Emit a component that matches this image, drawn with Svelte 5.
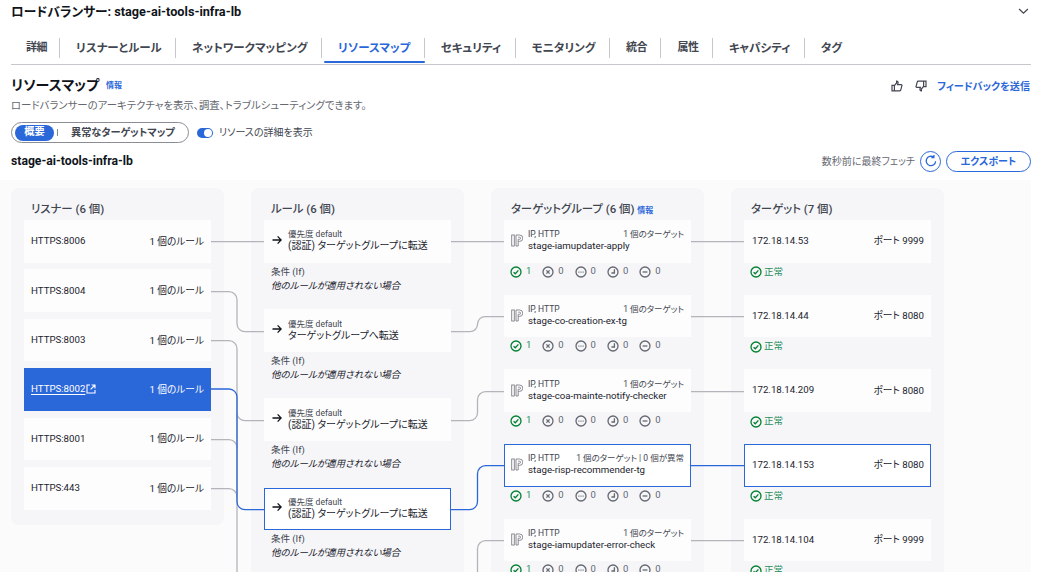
<script>
	const tabs = ["詳細", "リスナーとルール", "ネットワークマッピング", "リソースマップ", "セキュリティ", "モニタリング", "統合", "属性", "キャパシティ", "タグ"];
	const listeners = ["HTTPS:8006", "HTTPS:8004", "HTTPS:8003", "HTTPS:8002", "HTTPS:8001", "HTTPS:443"];
	const rules = [
		{ action: "(認証) ターゲットグループに転送" },
		{ action: "ターゲットグループへ転送" },
		{ action: "(認証) ターゲットグループに転送" },
		{ action: "(認証) ターゲットグループに転送", selected: true }
	];
	const groups = [
		{ name: "stage-iamupdater-apply", count: "1 個のターゲット" },
		{ name: "stage-co-creation-ex-tg", count: "1 個のターゲット" },
		{ name: "stage-coa-mainte-notify-checker", count: "1 個のターゲット" },
		{ name: "stage-risp-recommender-tg", count: "1 個のターゲット | 0 個が異常", selected: true },
		{ name: "stage-iamupdater-error-check", count: "1 個のターゲット" }
	];
	const targets = [
		{ ip: "172.18.14.53", port: "ポート 9999" },
		{ ip: "172.18.14.44", port: "ポート 8080" },
		{ ip: "172.18.14.209", port: "ポート 8080" },
		{ ip: "172.18.14.153", port: "ポート 8080", selected: true },
		{ ip: "172.18.14.104", port: "ポート 9999" }
	];
	const greyLines = [
		"M211 241.7H264",
		"M211 291.7H229a8 8 0 0 1 8 8V323.7a8 8 0 0 0 8 8H264",
		"M211 340.7H229a8 8 0 0 1 8 8V572",
		"M237 412.7a8 8 0 0 0 8 8H264",
		"M211 439.7H229a8 8 0 0 1 8 8",
		"M211 488.7H229a8 8 0 0 1 8 8",
		"M451 241.7H504",
		"M451 331.7H470a7.5 7.5 0 0 0 7.5-7.5a7.5 7.5 0 0 1 7.5-7.5H504",
		"M451 420.7H469.5a8 8 0 0 0 8-8V399.7a8 8 0 0 1 8-8H504",
		"M504 540.7H485.5a8 8 0 0 0-8 8V572",
		"M691 241.7H744",
		"M691 316.7H744",
		"M691 391.7H744",
		"M691 540.7H744"
	];
	const blueLines = [
		"M211 389H229a8 8 0 0 1 8 8V501.7a8 8 0 0 0 8 8H264",
		"M451 509.7H469.5a8 8 0 0 0 8-8V473.7a8 8 0 0 1 8-8H504",
		"M691 465.7H744"
	];
</script>

{#snippet status(kind)}
	<svg class="status-icon" class:ok={kind === "ok"} viewBox="0 0 12 12" width="12" height="12">
		<circle cx="6" cy="6" r="5" />
		{#if kind === "ok"}
			<path d="M3.6 6.2 5.3 7.8 8.4 4.4" />
		{:else if kind === "bad"}
			<path d="M4.4 4.4 7.6 7.6M7.6 4.4 4.4 7.6" />
		{:else if kind === "dots"}
			<path d="M3.4 6.2h1M5.5 6.2h1M7.6 6.2h1" />
		{:else if kind === "clock"}
			<path d="M7.4 3.2V7H4.4" />
		{:else}
			<path d="M3.6 6h4.8" />
		{/if}
	</svg>
{/snippet}

{#snippet ipIcon()}
	<svg class="ip-icon" viewBox="0 0 12 13" width="12" height="13">
		<rect x="0.7" y="1" width="2.6" height="11" />
		<path d="M5 12V1h3.6a3 3 0 0 1 0 6.4H7.2M7.2 3.2h1.3a1 1 0 0 1 0 2.1H7.2V12H5" />
	</svg>
{/snippet}

<div class="page">
	<header class="top">
		<h1>ロードバランサー: stage-ai-tools-infra-lb</h1>
		<svg class="chevron" viewBox="0 0 12 8" width="11" height="7"><path d="M1 1.2 6 6l5-4.8" /></svg>
	</header>

	<nav class="tabs">
		{#each tabs as tab, i}
			<div class="tab" class:active={i === 3} class:short={tab.length === 2 && i !== 9}>{tab}</div>
		{/each}
	</nav>

	<section class="intro">
		<div class="title-row">
			<h2>リソースマップ</h2>
			<a class="info">情報</a>
			<div class="feedback">
				<svg class="thumb" viewBox="0 0 12 12" width="12" height="12"><path d="M1 5.4h2.4v5.4H1zM3.4 5.6 5.6 3V1.2c1.3 0 1.7 1 1.4 2L6.6 4.6h3.6c.7 0 .9.6.7 1.1l-1.1 4.2c-.1.6-.5.9-1 .9H3.4" /></svg>
				<svg class="thumb down" viewBox="0 0 12 12" width="12" height="12"><path d="M1 5.4h2.4v5.4H1zM3.4 5.6 5.6 3V1.2c1.3 0 1.7 1 1.4 2L6.6 4.6h3.6c.7 0 .9.6.7 1.1l-1.1 4.2c-.1.6-.5.9-1 .9H3.4" /></svg>
				<a class="feedback-link">フィードバックを送信</a>
			</div>
		</div>
		<p class="desc">ロードバランサーのアーキテクチャを表示、調査、トラブルシューティングできます。</p>
		<div class="controls">
			<div class="segments">
				<span class="seg-on">概要</span>
				<span class="seg-div"></span>
				<span class="seg-off">異常なターゲットマップ</span>
			</div>
			<span class="toggle"><span class="knob"></span></span>
			<span class="toggle-label">リソースの詳細を表示</span>
		</div>
		<div class="name-row">
			<h3>stage-ai-tools-infra-lb</h3>
			<span class="fetched">数秒前に最終フェッチ</span>
			<button class="refresh" aria-label="更新">
				<svg viewBox="0 0 14 14" width="14" height="14"><path d="M11.6 7.2A4.7 4.7 0 1 1 9.6 3.1M9.9 1v2.6H7.3" /></svg>
			</button>
			<button class="export">エクスポート</button>
		</div>
	</section>

	<section class="canvas">
		<div class="column listeners">
			<div class="col-title">リスナー (6 個)</div>
			<div class="stack">
				{#each listeners as name, i}
					<div class="card row" class:current={i === 3}>
						{#if i === 3}
							<span class="linked"><span class="under">{name}</span>
								<svg viewBox="0 0 10 10" width="10" height="10"><path d="M4 1H1v8h8V6M5.6 1H9v3.4M9 1 4.6 5.4" /></svg>
							</span>
						{:else}
							<span>{name}</span>
						{/if}
						<span>1 個のルール</span>
					</div>
				{/each}
			</div>
		</div>

		<div class="column">
			<div class="col-title">ルール (6 個)</div>
			{#each rules as rule}
				<div class="rule-item">
					<div class="card rule" class:selected={rule.selected}>
						<svg class="arrow" viewBox="0 0 10 10" width="10" height="10"><path d="M0.5 5h8.5M5.6 1.4 9.2 5 5.6 8.6" /></svg>
						<div>
							<div class="small">優先度 default</div>
							<div class="main">{rule.action}</div>
						</div>
					</div>
					<div class="cond first">条件 (If)</div>
					<div class="cond em">他のルールが適用されない場合</div>
				</div>
			{/each}
		</div>

		<div class="column">
			<div class="col-title">ターゲットグループ (6 個) <a class="info near">情報</a></div>
			{#each groups as group}
				<div class="map-item">
					<div class="card group" class:selected={group.selected}>
						{@render ipIcon()}
						<div class="group-body">
							<div class="small spread"><span>IP, HTTP</span><span>{group.count}</span></div>
							<div class="main">{group.name}</div>
						</div>
					</div>
					<div class="counts">
						{#each ["ok", "bad", "dots", "clock", "minus"] as kind, i}
							<span class="count" class:ok-text={i === 0}>{@render status(kind)}<sup>{i === 0 ? 1 : 0}</sup></span>
						{/each}
					</div>
				</div>
			{/each}
		</div>

		<div class="column">
			<div class="col-title">ターゲット (7 個)</div>
			{#each targets as target}
				<div class="map-item">
					<div class="card row target" class:selected={target.selected}>
						<span>{target.ip}</span>
						<span>{target.port}</span>
					</div>
					<div class="healthy">{@render status("ok")}<span>正常</span></div>
				</div>
			{/each}
		</div>

		<svg class="links" viewBox="0 180 1031 392" width="1031" height="392">
			{#each greyLines as d}
				<path {d} />
			{/each}
			{#each blueLines as d}
				<path class="blue" {d} />
			{/each}
		</svg>
	</section>
</div>

<style>
	:global(body) {
		margin: 0;
		overflow: hidden;
	}

	.page {
		width: 1042px;
		height: 572px;
		overflow: hidden;
		background: #fff;
		color: #0f141a;
		font-family: Roboto, "Noto Sans CJK JP", sans-serif;
		font-feature-settings: "palt";
	}

	h1, h2, h3, p {
		margin: 0;
	}

	.top {
		height: 22px;
		padding: 0 13px 0 11px;
		display: flex;
		align-items: center;
		justify-content: space-between;
	}

	h1 {
		font-size: 12.7px;
		font-weight: 700;
		margin-bottom: 2px;
	}

	.chevron path {
		fill: none;
		stroke: #424650;
		stroke-width: 1.4;
	}

	.tabs {
		margin: 14px 11px 0;
		height: 28px;
		display: flex;
		border-bottom: 1px solid #c6c6cd;
	}

	.tab {
		height: 20px;
		margin-top: 2px;
		padding: 0 13.4px 0 16px;
		line-height: 20px;
		font-size: 11.5px;
		font-weight: 700;
		color: #424650;
		border-right: 1px solid #c6c6cd;
		position: relative;
	}

	.tab.short {
		font-size: 11px;
		letter-spacing: -0.5px;
	}

	.tab:first-child {
		padding: 0 12px 0 15px;
	}

	.tab:last-child {
		border-right: 0;
	}

	.tab.active {
		color: #2a67d9;
	}

	.tab.active::after {
		content: "";
		position: absolute;
		left: 2px;
		right: -1px;
		bottom: -5px;
		height: 2.5px;
		border-radius: 2px;
		background: #2a67d9;
	}

	.intro {
		padding: 0 11px;
	}

	.title-row {
		height: 21px;
		margin-top: 9px;
		display: flex;
		align-items: center;
	}

	h2 {
		font-size: 14px;
		font-weight: 700;
		margin-bottom: 2px;
	}

	.info {
		font-size: 8px;
		font-weight: 700;
		color: #2a67d9;
		text-decoration: none;
		margin-left: 7px;
	}

	.info.near {
		margin-left: 0;
	}

	.feedback {
		margin-left: auto;
		margin-right: 1px;
		display: flex;
		align-items: center;
		position: relative;
		top: 1px;
	}

	.thumb {
		margin-right: 12px;
	}

	.thumb path {
		fill: none;
		stroke: #424650;
		stroke-width: 1.2;
	}

	.thumb.down {
		transform: scale(-1, -1);
		margin-right: 10px;
	}

	.feedback-link {
		font-size: 10.1px;
		font-weight: 700;
		color: #2a67d9;
	}

	.desc {
		margin-top: 3px;
		height: 15px;
		line-height: 15px;
		font-size: 10.4px;
		color: #656871;
	}

	.controls {
		margin-top: 9px;
		display: flex;
		align-items: center;
	}

	.segments {
		width: 178px;
		height: 21px;
		box-sizing: border-box;
		padding: 0 3px;
		border: 1px solid #8c8c94;
		border-radius: 11px;
		display: flex;
		align-items: center;
		font-size: 10.2px;
		font-weight: 700;
	}

	.seg-on {
		width: 39px;
		height: 16px;
		box-sizing: border-box;
		padding-bottom: 2px;
		line-height: 14px;
		text-align: center;
		border-radius: 8px;
		background: #2a67d9;
		color: #fff;
	}

	.seg-div {
		width: 1px;
		height: 7px;
		margin: 0 13px 0 3px;
		background: #8c8c94;
	}

	.seg-off {
		color: #424650;
		padding-bottom: 3px;
	}

	.toggle {
		width: 16px;
		height: 10px;
		margin-left: 8px;
		border-radius: 5px;
		background: #2a67d9;
		position: relative;
	}

	.knob {
		position: absolute;
		right: 1px;
		top: 1px;
		width: 8px;
		height: 8px;
		border-radius: 50%;
		background: #fff;
	}

	.toggle-label {
		margin-left: 6px;
		padding-bottom: 3px;
		font-size: 10px;
		color: #424650;
	}

	.name-row {
		margin-top: 7px;
		height: 22px;
		display: flex;
		align-items: center;
	}

	h3 {
		font-size: 12.2px;
		font-weight: 700;
		margin-right: auto;
	}

	.fetched {
		font-size: 10px;
		color: #656871;
		margin: 0 5px 1px 0;
	}

	.refresh {
		width: 21px;
		height: 21px;
		padding: 0;
		display: grid;
		place-content: center;
		border: 1px solid #2a67d9;
		border-radius: 50%;
		background: #fff;
	}

	.refresh path {
		fill: none;
		stroke: #2a67d9;
		stroke-width: 1.3;
	}

	.export {
		width: 85px;
		height: 21px;
		margin-left: 5px;
		padding: 0 0 2px;
		border: 1px solid #2a67d9;
		border-radius: 11px;
		background: #fff;
		color: #2a67d9;
		font: inherit;
		font-size: 10px;
		font-weight: 700;
	}

	.canvas {
		position: relative;
		width: 1031px;
		height: 392px;
		margin-top: 8px;
		padding: 8px 0 0 11px;
		box-sizing: border-box;
		display: flex;
		align-items: flex-start;
		gap: 27px;
		overflow: hidden;
		background: #fbfbfc;
	}

	.column {
		width: 213px;
		height: 500px;
		box-sizing: border-box;
		padding: 0 13px;
		border-radius: 8px;
		background: #f6f6f9;
		flex: none;
	}

	.column.listeners {
		height: 337px;
	}

	.col-title {
		height: 32px;
		padding: 7px 0 0 7px;
		box-sizing: border-box;
		line-height: 28px;
		font-size: 11.4px;
		color: #424650;
		font-weight: 500;
	}

	.stack {
		display: flex;
		flex-direction: column;
		gap: 6.7px;
	}

	.card {
		height: 42.7px;
		box-sizing: border-box;
		background: #fdfdfd;
		font-size: 9.7px;
		color: #1b232d;
	}

	.card.selected {
		background: #fff;
		border: 1px solid #2a67d9;
	}

	.row {
		display: flex;
		align-items: center;
		justify-content: space-between;
		padding: 0 7px 1px;
	}

	.current {
		background: #2a67d9;
		color: #fff;
	}

	.linked {
		display: flex;
		align-items: center;
		gap: 1px;
	}

	.under {
		text-decoration: underline;
		text-underline-offset: 2px;
	}

	.linked path {
		fill: none;
		stroke: #fff;
		stroke-width: 1.1;
	}

	.rule-item {
		height: 89.2px;
	}

	.rule {
		display: flex;
		align-items: center;
		padding: 0 0 1px 8px;
	}

	.rule.selected {
		padding-left: 7px;
	}

	.arrow {
		flex: none;
		margin-right: 6px;
		position: relative;
		top: -1px;
	}

	.arrow path {
		fill: none;
		stroke: #0f141a;
		stroke-width: 1.3;
	}

	.small {
		font-size: 8.5px;
		line-height: 11px;
		color: #424650;
	}

	.main {
		font-size: 10px;
		line-height: 12px;
		color: #1b232d;
	}

	.group .main {
		font-size: 9.7px;
	}

	.cond {
		padding-left: 7px;
		font-size: 9.5px;
		line-height: 14px;
		color: #424650;
	}

	.cond.first {
		margin-top: 2px;
	}

	.em {
		font-style: italic;
		color: #1b232d;
	}

	.map-item {
		height: 74.7px;
	}

	.group {
		display: flex;
		align-items: center;
		padding: 0 7px 1px;
	}

	.group.selected {
		padding: 0 6px 1px;
	}

	.target {
		padding: 0 7px 2px 8px;
	}

	.target.selected {
		padding: 0 6px 2px 7px;
	}

	.ip-icon {
		flex: none;
		margin-right: 5px;
	}

	.ip-icon rect,
	.ip-icon path {
		fill: none;
		stroke: #7d8088;
		stroke-width: 0.9;
	}

	.group-body {
		flex: 1;
		min-width: 0;
	}

	.spread {
		display: flex;
		justify-content: space-between;
	}

	.counts {
		display: flex;
		padding: 2px 0 0 6px;
	}

	.count {
		width: 32.3px;
		display: flex;
		font-size: 9px;
		color: #656871;
	}

	.count sup {
		margin-left: 4px;
		line-height: 12px;
		font-size: 9.5px;
	}

	.ok-text {
		color: #1f8f5a;
	}

	.status-icon {
		flex: none;
		margin-top: 1px;
	}

	.status-icon circle,
	.status-icon path {
		fill: none;
		stroke: #656871;
		stroke-width: 1.3;
	}

	.status-icon.ok circle,
	.status-icon.ok path {
		stroke: #00802f;
	}

	.healthy {
		display: flex;
		align-items: center;
		gap: 2px;
		padding: 2px 0 0 6px;
		font-size: 9.5px;
		line-height: 14px;
		color: #1f8f5a;
	}

	.links {
		position: absolute;
		left: 0;
		top: 0;
		pointer-events: none;
	}

	.links path {
		fill: none;
		stroke: #b4b4bb;
		stroke-width: 1.3;
	}

	.links path.blue {
		stroke: #2a67d9;
	}
</style>
